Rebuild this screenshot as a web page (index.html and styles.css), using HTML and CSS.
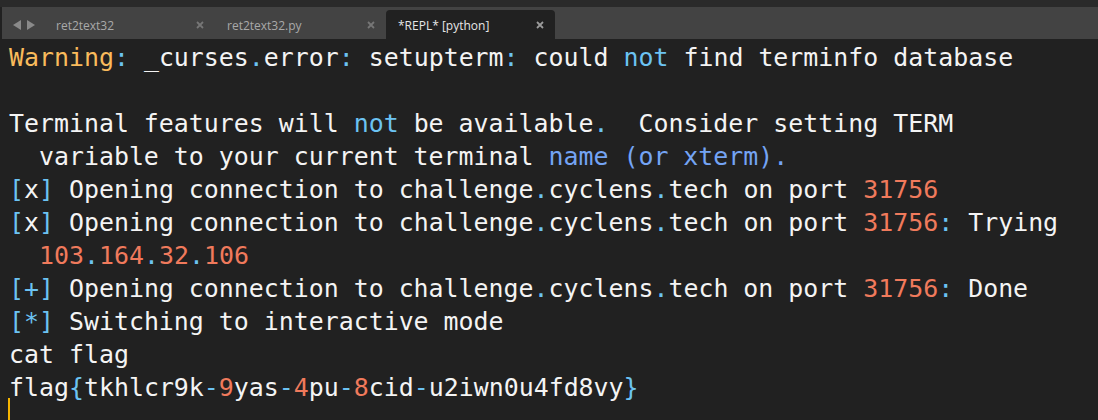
FILE: index.html
```html
<!DOCTYPE html>
<html>
<head>
<meta charset="utf-8">
<link rel="stylesheet" href="styles.css">
</head>
<body>
<div class="top-strip"></div>
<div class="tabbar">
  <div class="nav">
    <svg width="24" height="10" viewBox="0 0 24 10"><polygon points="8,0 8,10 0,5" fill="#8a8a8a"/><polygon points="14,0 14,10 22,5" fill="#8a8a8a"/></svg>
  </div>
  <div class="tab"><span class="label">ret2text32</span><svg class="close" width="8" height="8" viewBox="0 0 8 8"><path d="M1 1L7 7M7 1L1 7" stroke="#767676" stroke-width="1.8"/></svg></div>
  <div class="tab"><span class="label">ret2text32.py</span><svg class="close" width="8" height="8" viewBox="0 0 8 8"><path d="M1 1L7 7M7 1L1 7" stroke="#767676" stroke-width="1.8"/></svg></div>
  <div class="tab tab-active"><span class="label">*REPL* [python]</span><svg class="close" width="8" height="8" viewBox="0 0 8 8"><path d="M1 1L7 7M7 1L1 7" stroke="#9a9a9a" stroke-width="1.8"/></svg></div>
</div>
<div class="editor">
  <div class="line"><span class="y">Warning</span><span class="p">:</span> _curses<span class="p">.</span>error<span class="p">:</span> setupterm<span class="p">:</span> could <span class="p">not</span> find terminfo database</div>
  <div class="line"> </div>
  <div class="line">Terminal features will <span class="p">not</span> be available<span class="p">.</span>  Consider setting TERM</div>
  <div class="line">  variable to your current terminal <span class="b">name (or xterm).</span></div>
  <div class="line"><span class="p">[</span>x<span class="p">]</span> Opening connection to challenge<span class="p">.</span>cyclens<span class="p">.</span>tech on port <span class="n">31756</span></div>
  <div class="line"><span class="p">[</span>x<span class="p">]</span> Opening connection to challenge<span class="p">.</span>cyclens<span class="p">.</span>tech on port <span class="n">31756</span><span class="p">:</span> Trying</div>
  <div class="line">  <span class="n">103</span><span class="p">.</span><span class="n">164</span><span class="p">.</span><span class="n">32</span><span class="p">.</span><span class="n">106</span></div>
  <div class="line"><span class="p">[+]</span> Opening connection to challenge<span class="p">.</span>cyclens<span class="p">.</span>tech on port <span class="n">31756</span><span class="p">:</span> Done</div>
  <div class="line"><span class="p">[*]</span> Switching to interactive mode</div>
  <div class="line">cat flag</div>
  <div class="line">flag<span class="p">{</span>tkhlcr9k<span class="p">-</span><span class="n">9</span>yas<span class="p">-</span><span class="n">4</span>pu<span class="p">-</span><span class="n">8</span>cid<span class="p">-</span>u2iwn0u4fd8vy<span class="p">}</span></div>
  <div class="line"><span class="cursor"></span></div>
</div>
</body>
</html>
```
FILE: styles.css
```css
html, body {
  margin: 0;
  padding: 0;
  background: #212121;
  overflow: hidden;
}
body {
  width: 1098px;
  height: 420px;
}
.top-strip {
  height: 7px;
  background: #2a2a2a;
}
.tabbar {
  height: 32px;
  background: #434343;
  margin-left: 2px;
  display: flex;
  align-items: flex-end;
  font-family: "Open Sans", sans-serif;
  font-size: 12px;
}
.nav {
  width: 42px;
  height: 29px;
  display: flex;
  align-items: center;
  padding-left: 11px;
  box-sizing: border-box;
}
.nav svg {
  display: block;
  margin-top: 1px;
}
.tab {
  width: 171px;
  height: 29px;
  display: flex;
  align-items: center;
  box-sizing: border-box;
  padding-left: 12px;
  padding-right: 11px;
  color: #a9a9a9;
}
.tab .label {
  flex: 1;
  margin-top: 1px;
}
.tab .close {
  display: block;
  margin-top: 1px;
}
.tab-active {
  width: 169px;
  background: #212121;
  border-radius: 4px 4px 0 0;
  color: #e6e6e6;
}
.editor {
  padding: 2px 0 0 9px;
  font-family: "DejaVu Sans Mono", monospace;
  font-size: 24.9px;
  line-height: 33px;
  color: #f4f4f4;
}
.line {
  height: 33px;
  white-space: pre;
}
.y { color: #f9bb5c; }
.p { color: #6cc3f2; }
.b { color: #74a4f4; }
.n { color: #f07a5c; }
.cursor {
  display: inline-block;
  width: 2px;
  height: 22px;
  background: #f5b400;
  vertical-align: top;
  margin-top: -6px;
  margin-left: -1px;
}
```
